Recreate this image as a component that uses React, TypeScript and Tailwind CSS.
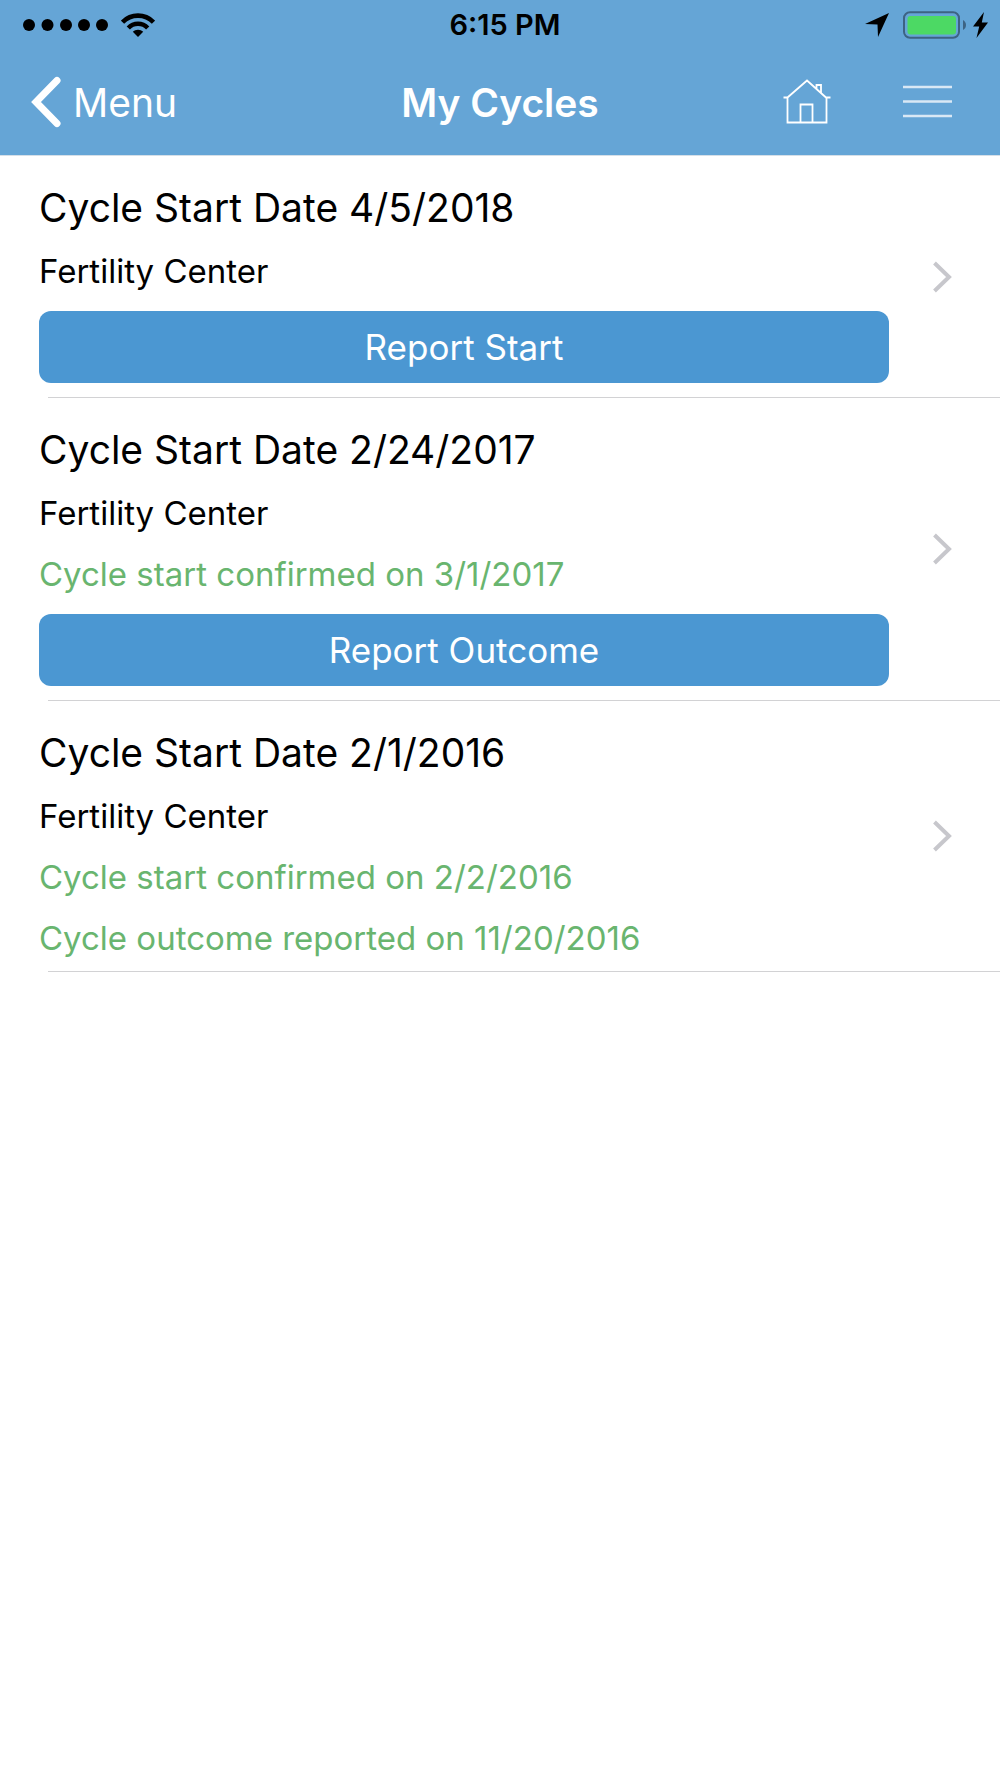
interface Cycle {
  id: number
  startDate: string
  clinic: string
  notes: string[]
  action?: string
}

const cycles: Cycle[] = [
  { id: 1, startDate: '4/5/2018', clinic: 'Fertility Center', notes: [], action: 'Report Start' },
  {
    id: 2,
    startDate: '2/24/2017',
    clinic: 'Fertility Center',
    notes: ['Cycle start confirmed on 3/1/2017'],
    action: 'Report Outcome',
  },
  {
    id: 3,
    startDate: '2/1/2016',
    clinic: 'Fertility Center',
    notes: ['Cycle start confirmed on 2/2/2016', 'Cycle outcome reported on 11/20/2016'],
  },
]

function StatusBar() {
  return (
    <div className="grid h-[49px] grid-cols-[1fr_auto_1fr] items-center pl-[22px] pr-3 text-black">
      <div className="flex items-center gap-3">
        <svg width="87" height="12" viewBox="0 0 87 12" fill="currentColor" aria-label="Signal">
          <circle cx="7" cy="6" r="6" />
          <circle cx="25.5" cy="6" r="6" />
          <circle cx="44" cy="6" r="6" />
          <circle cx="62" cy="6" r="6" />
          <circle cx="80" cy="6" r="6" />
        </svg>
        <svg width="34" height="24" viewBox="0 0 34 24" fill="none" stroke="currentColor" aria-label="Wi-Fi">
          <path d="M1.5 9.2C10 .4 24 .4 32.5 9.2" strokeWidth="4.6" />
          <path d="M7.3 15C12.5 9.4 21.5 9.4 26.7 15" strokeWidth="4.4" />
          <path d="M17 24l-5.2-5.2c2.6-2.8 7.8-2.8 10.4 0z" fill="currentColor" stroke="none" />
        </svg>
      </div>
      <span className="text-[29px] font-semibold leading-none">6:15 PM</span>
      <div className="flex items-center justify-end">
        <svg width="24" height="24" viewBox="0 0 24 24" fill="currentColor" aria-label="Location">
          <path d="M24 0L13 24l-.5-12.5L0 11z" />
        </svg>
        <svg className="ml-[14px]" width="63" height="28" viewBox="0 0 63 28" aria-label="Battery">
          <rect x="1" y="1.2" width="55" height="25.6" rx="6" fill="none" stroke="#3d6383" strokeWidth="2" />
          <rect x="4.5" y="5" width="48.5" height="18.5" rx="3" fill="#4cd964" />
          <path d="M60 9c4 2 4 8 0 10z" fill="#3d6383" />
        </svg>
        <svg className="ml-[7px]" width="15" height="26" viewBox="0 0 15 26" fill="currentColor" aria-label="Charging">
          <path d="M11 0L0 14.5h6.2L3.5 26 15 10.5H8.8z" />
        </svg>
      </div>
    </div>
  )
}

function NavBar() {
  return (
    <nav className="grid h-[106px] grid-cols-[1fr_auto_1fr] items-center px-[30px] text-[39px] leading-none text-white">
      <a href="#menu" className="flex items-center gap-3">
        <svg width="31" height="52" viewBox="0 0 31 52" fill="none" stroke="currentColor" strokeWidth="7" strokeLinecap="round" strokeLinejoin="miter" aria-hidden="true">
          <path d="M27 4.5L6 26l21 21.5" />
        </svg>
        Menu
      </a>
      <h1 className="font-semibold">My Cycles</h1>
      <div className="flex items-center justify-end gap-[72px] pr-[18px]">
        <button type="button" aria-label="Home">
          <svg width="48" height="46" viewBox="0 0 48 46" fill="none" stroke="currentColor" strokeWidth="1.8" aria-hidden="true">
            <path d="M.5 18.5h4L24 1.5l19 17h4.5M4.5 18v25.5h39V18M17.5 43.5V25.5h12v18M33.5 9.5V6H38v7.5" />
          </svg>
        </button>
        <button type="button" aria-label="Options">
          <svg width="49" height="34" viewBox="0 0 49 34" stroke="#d9e8f5" strokeWidth="2.4" aria-hidden="true">
            <path d="M0 2h49M0 16.5h49M0 31h49" />
          </svg>
        </button>
      </div>
    </nav>
  )
}

function CycleRow({ cycle }: { cycle: Cycle }) {
  return (
    <li>
      <div className="flex items-center gap-11 pl-[39px] pr-12">
        <div className="min-w-0 flex-1 pb-0.5 pt-[18px]">
          <h2 className="text-[39px] leading-[67px] text-black">Cycle Start Date {cycle.startDate}</h2>
          <p className="text-[33px] leading-[61px] text-black">{cycle.clinic}</p>
          {cycle.notes.map((note) => (
            <p key={note} className="text-[33px] leading-[61px] text-[#69b56f]">
              {note}
            </p>
          ))}
          {cycle.action && (
            <button
              type="button"
              className="mb-3 mt-[9px] block h-[72px] w-full rounded-xl bg-[#4b97d2] text-[35px] leading-none text-white"
            >
              {cycle.action}
            </button>
          )}
        </div>
        <a href={`#cycle-${cycle.id}`} aria-label={`Open cycle ${cycle.startDate}`}>
          <svg width="19" height="32" viewBox="0 0 19 32" fill="none" stroke="#c7c7cc" strokeWidth="4" aria-hidden="true">
            <path d="M1.5 2L16 16 1.5 30" />
          </svg>
        </a>
      </div>
      <div className="ml-12 h-px bg-[#d2d2d4]" />
    </li>
  )
}

export default function App() {
  return (
    <div className="min-h-screen bg-white font-['Inter',sans-serif]">
      <header className="border-b border-[#d5dfe8] bg-[#65a5d6]">
        <StatusBar />
        <NavBar />
      </header>
      <main>
        <ul>
          {cycles.map((cycle) => (
            <CycleRow key={cycle.id} cycle={cycle} />
          ))}
        </ul>
      </main>
    </div>
  )
}
